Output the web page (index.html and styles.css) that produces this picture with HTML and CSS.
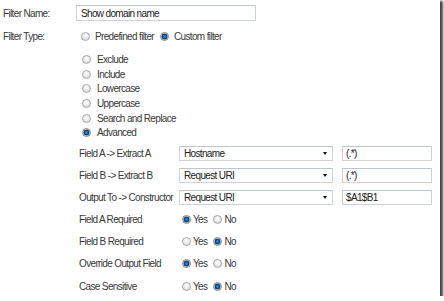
FILE: index.html
```html
<!DOCTYPE html>
<html>
<head>
<meta charset="utf-8">
<link rel="stylesheet" href="styles.css">
</head>
<body>
<div class="frame">
  <div class="row row-name">
    <span class="lbl lbl-top">Filter Name:</span>
    <div class="box box-name">Show domain name</div>
  </div>
  <div class="row row-type">
    <span class="lbl lbl-top">Filter Type:</span>
    <span class="radio"></span><span class="opt opt-pre">Predefined filter</span>
    <span class="radio on"></span><span class="opt">Custom filter</span>
  </div>
  <div class="options">
    <div class="orow"><span class="radio"></span><span class="opt">Exclude</span></div>
    <div class="orow"><span class="radio"></span><span class="opt">Include</span></div>
    <div class="orow"><span class="radio"></span><span class="opt">Lowercase</span></div>
    <div class="orow"><span class="radio"></span><span class="opt">Uppercase</span></div>
    <div class="orow"><span class="radio"></span><span class="opt">Search and Replace</span></div>
    <div class="orow"><span class="radio on"></span><span class="opt">Advanced</span></div>
  </div>
  <div class="fields">
    <div class="frow">
      <span class="lbl lbl-field">Field A -&gt; Extract A</span>
      <div class="box sel">Hostname<span class="arrow"></span></div>
      <div class="box txt">(.*)</div>
    </div>
    <div class="frow">
      <span class="lbl lbl-field">Field B -&gt; Extract B</span>
      <div class="box sel">Request URI<span class="arrow"></span></div>
      <div class="box txt">(.*)</div>
    </div>
    <div class="frow">
      <span class="lbl lbl-field">Output To -&gt; Constructor</span>
      <div class="box sel">Request URI<span class="arrow"></span></div>
      <div class="box txt">$A1$B1</div>
    </div>
  </div>
  <div class="yn">
    <div class="yrow"><span class="lbl lbl-yn">Field A Required</span><span class="radio on"></span><span class="opt opt-yes">Yes</span><span class="radio"></span><span class="opt">No</span></div>
    <div class="yrow"><span class="lbl lbl-yn">Field B Required</span><span class="radio"></span><span class="opt opt-yes">Yes</span><span class="radio on"></span><span class="opt">No</span></div>
    <div class="yrow"><span class="lbl lbl-yn">Override Output Field</span><span class="radio on"></span><span class="opt opt-yes">Yes</span><span class="radio"></span><span class="opt">No</span></div>
    <div class="yrow"><span class="lbl lbl-yn">Case Sensitive</span><span class="radio"></span><span class="opt opt-yes">Yes</span><span class="radio on"></span><span class="opt">No</span></div>
  </div>
</div>
</body>
</html>
```
FILE: styles.css
```css
html, body {
  margin: 0;
  padding: 0;
  background: #fff;
}
.frame {
  width: 440px;
  height: 296px;
  box-sizing: border-box;
  padding: 5px 0 0 3px;
  background: #fff;
  box-shadow: 2px 2px 2px 1px rgba(40, 40, 40, 0.85);
  font-family: "Liberation Sans", Arial, sans-serif;
  font-size: 10px;
  letter-spacing: -0.65px;
  color: #3a3a3a;
  overflow: hidden;
}
.row {
  display: flex;
  align-items: center;
  height: 16px;
}
.row-type {
  margin-top: 7px;
}
.lbl {
  flex: none;
  white-space: nowrap;
}
.lbl-top {
  width: 78px;
}
.row-name .lbl-top {
  width: 73px;
}
.box {
  box-sizing: border-box;
  height: 16px;
  border: 1px solid #cdd2d9;
  border-top-color: #bfc5cd;
  background: #fff;
  color: #222;
  display: flex;
  align-items: center;
  padding-left: 5px;
  white-space: nowrap;
}
.box-name {
  width: 180px;
  padding-left: 4px;
}
.radio {
  flex: none;
  width: 9px;
  height: 9px;
  box-sizing: border-box;
  border-radius: 50%;
  border: 1px solid #a8a8a8;
  background: radial-gradient(circle at 50% 35%, #ffffff 0%, #ececec 45%, #d2d2d2 100%);
}
.radio.on {
  border-color: #8a8a8a;
  background: radial-gradient(circle at 50% 50%, #2a8de0 0, #1164a8 1.6px, #0b3558 2.6px, #b9c3cc 3.2px, #e4e4e4 100%);
}
.opt {
  margin-left: 5px;
  white-space: nowrap;
}
.opt-pre {
  margin-right: 6px;
}
.options {
  margin-top: 8px;
  padding-left: 79px;
}
.orow {
  display: flex;
  align-items: center;
  height: 14.7px;
}
.orow .opt {
  margin-left: 6px;
}
.fields {
  margin-top: 2px;
  padding-left: 76px;
}
.frow {
  display: flex;
  align-items: center;
  height: 22px;
}
.lbl-field {
  width: 100px;
}
.sel {
  width: 154px;
  height: 15px;
  position: relative;
  padding-left: 4px;
}
.arrow {
  position: absolute;
  right: 5px;
  top: 5px;
  width: 0;
  height: 0;
  border-left: 2.5px solid transparent;
  border-right: 2.5px solid transparent;
  border-top: 3px solid #111;
}
.txt {
  width: 90px;
  height: 15px;
  margin-left: 9px;
  padding-left: 3px;
}
.yn {
  padding-left: 76px;
}
.yrow {
  display: flex;
  align-items: center;
  height: 22.3px;
}
.lbl-yn {
  width: 103px;
}
.yrow .opt {
  margin-left: 2px;
}
.yrow .opt-yes {
  margin-right: 6px;
}
```
